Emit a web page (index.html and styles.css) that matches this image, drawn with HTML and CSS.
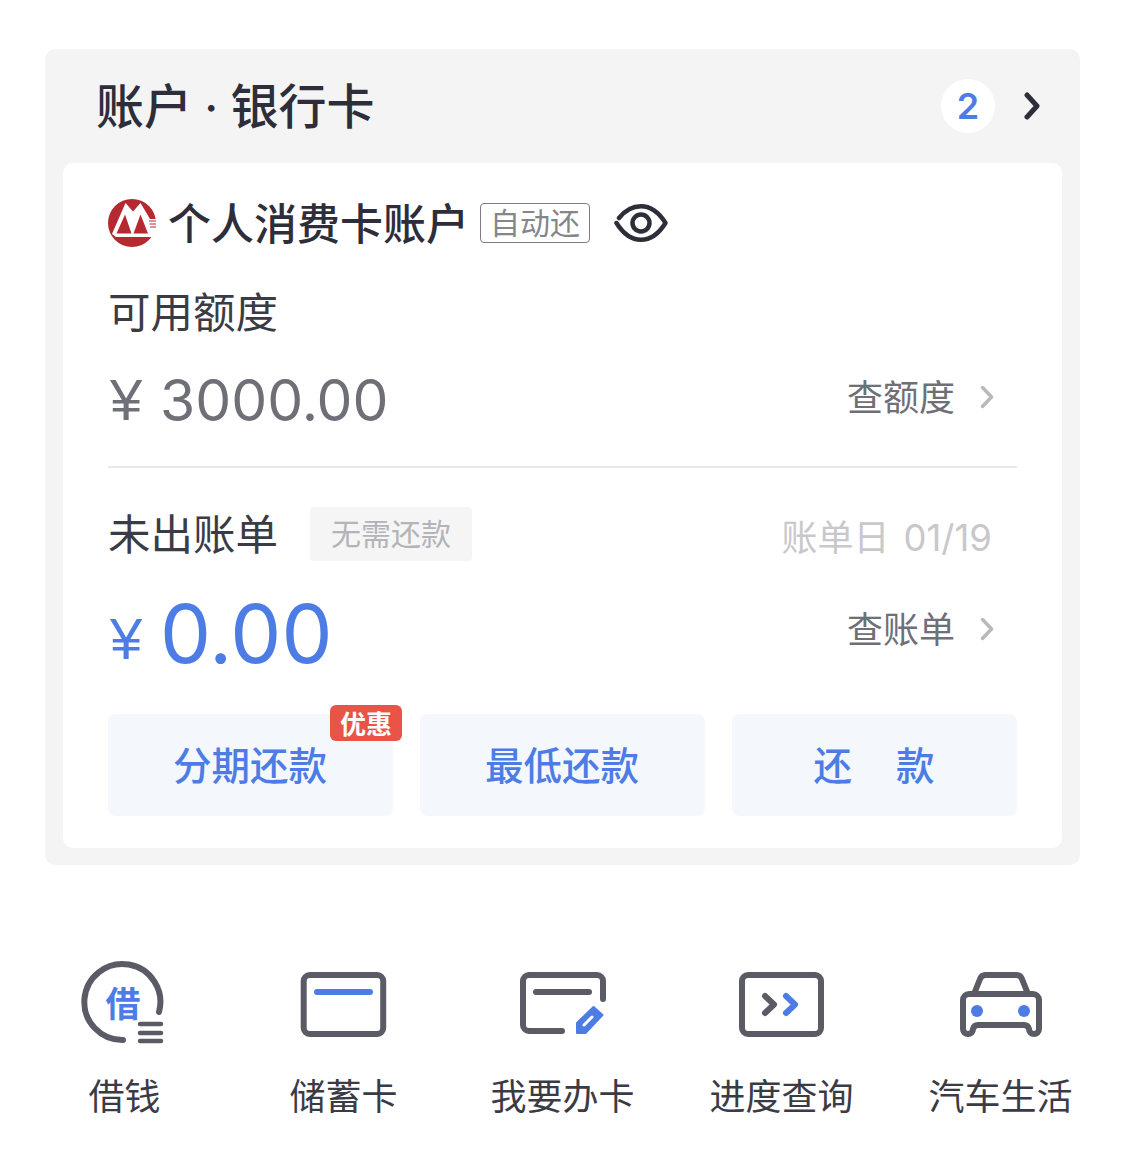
FILE: index.html
```html
<!DOCTYPE html>
<html lang="zh-CN">
<head>
<meta charset="utf-8">
<title>账户</title>
<link rel="stylesheet" href="styles.css">
</head>
<body>
<main class="page">
  <section class="panel">
    <header class="panel-head">
      <h1 class="panel-title">账户<span class="title-dot"> · </span>银行卡</h1>
      <div class="panel-actions">
        <span class="count">2</span>
        <svg class="head-chevron" viewBox="0 0 16 28"><path d="M3 3 L13 14 L3 25"/></svg>
      </div>
    </header>
    <div class="card">
      <div class="account-row">
        <svg class="logo" viewBox="0 0 48 48">
          <circle cx="24" cy="24" r="24" fill="#b42a30"/>
          <path d="M4 35 L17.500 4 L25 12.500 L32.500 4 L42 20 H48.500 V30 L44 38 H8 Z" fill="#fff"/>
          <path d="M8.500 34.500 L17 15.500 L23.500 34.500 Z M25.500 34.500 L32.500 15.500 L40 34.500 Z" fill="#b42a30"/>
          <path d="M41 22 H49 M41.500 25 H49 M42 28 H49" stroke="#b42a30" stroke-width="1"/>
        </svg>
        <span class="account-name">个人消费卡账户</span>
        <span class="auto-tag">自动还</span>
        <svg class="eye" viewBox="0 0 54 40">
          <path d="M5 15 C11 7.500 19 3.250 27 3.250 C36 3.250 44 8 51.500 20 C44 32 36 36.750 27 36.750 C18 36.750 10 32 2.500 20"/>
          <circle cx="27" cy="20" r="8.500"/>
        </svg>
      </div>

      <div class="label-row">可用额度</div>
      <div class="amount-row">
        <div class="amount amount-grey"><span class="yen">¥</span><span class="num">3000.00</span></div>
        <a class="more"><span class="more-text">查额度</span><svg class="more-chevron" viewBox="0 0 14 24"><path d="M2.500 2.500 L11.500 12 L2.500 21.500"/></svg></a>
      </div>

      <div class="divider"></div>

      <div class="bill-row">
        <span class="bill-label">未出账单</span>
        <span class="no-pay">无需还款</span>
        <span class="bill-date">账单日<span class="bill-digits">01/19</span></span>
      </div>
      <div class="amount-row amount-row-big">
        <div class="amount amount-blue"><span class="yen">¥</span><span class="num num-big">0.00</span></div>
        <a class="more more-high"><span class="more-text">查账单</span><svg class="more-chevron" viewBox="0 0 14 24"><path d="M2.500 2.500 L11.500 12 L2.500 21.500"/></svg></a>
      </div>

      <div class="buttons">
        <button class="btn">分期还款<span class="promo">优惠</span></button>
        <button class="btn">最低还款</button>
        <button class="btn btn-spaced"><span>还</span><span>款</span></button>
      </div>
    </div>
  </section>

  <nav class="shortcuts">
    <a class="shortcut">
      <svg class="icon" viewBox="0 0 100 100">
        <path class="ink" d="M85 57 A38 38 0 1 0 49 85"/>
        <path class="ink thin" d="M66 69 H87 M66 78 H87 M66 86 H87"/>
        <text class="icon-char" x="49" y="62" text-anchor="middle">借</text>
      </svg>
      <span class="shortcut-label">借钱</span>
    </a>
    <a class="shortcut">
      <svg class="icon" viewBox="0 0 100 100">
        <rect class="ink" x="10.700" y="20" width="79.500" height="59" rx="6"/>
        <path class="accent" d="M24 37 H77"/>
      </svg>
      <span class="shortcut-label">储蓄卡</span>
    </a>
    <a class="shortcut">
      <svg class="icon" viewBox="0 0 100 100">
        <path class="ink" d="M50 76 H17 a6 6 0 0 1 -6 -6 V26 a6 6 0 0 1 6 -6 H85 a6 6 0 0 1 6 6 V44"/>
        <path class="ink" d="M24 37 H77"/>
        <path class="pencil" d="M65 78 V68 L81.500 52 L90.500 60 L73.500 78 Z"/>
        <path class="slit" d="M72 70 L80 62"/>
      </svg>
      <span class="shortcut-label">我要办卡</span>
    </a>
    <a class="shortcut">
      <svg class="icon" viewBox="0 0 100 100">
        <rect class="ink" x="11" y="20" width="79" height="59" rx="6"/>
        <path class="ink" d="M34 41 L43 49.500 L34 58"/>
        <path class="accent" d="M55 41 L64 49.500 L55 58"/>
      </svg>
      <span class="shortcut-label">进度查询</span>
    </a>
    <a class="shortcut">
      <svg class="icon" viewBox="0 0 100 100">
        <path class="ink" d="M19 39 H83 a6 6 0 0 1 6 6 V74 a5 5 0 0 1 -10 0 q-1 -4 -5 -4 H28 q-4 0 -5 4 a5 5 0 0 1 -10 0 V45 a6 6 0 0 1 6 -6 Z"/>
        <path class="ink" d="M24 39 L30 24 a6 6 0 0 1 6 -4 H66 a6 6 0 0 1 6 4 L78 39"/>
        <circle class="dot" cx="27" cy="56" r="6"/>
        <circle class="dot" cx="74" cy="56" r="6"/>
      </svg>
      <span class="shortcut-label">汽车生活</span>
    </a>
  </nav>
</main>
</body>
</html>
```
FILE: styles.css
```css
* { box-sizing: border-box; }
html, body { margin: 0; padding: 0; background: #fff; }
body {
  font-family: "Noto Sans CJK SC", "Inter", sans-serif;
  color: #30303c;
}
.page { width: 1125px; height: 1163px; padding-top: 49px; overflow: hidden; }

.panel {
  margin: 0 45px;
  background: #f4f4f5;
  border-radius: 10px;
  padding: 0 18px 17px;
}
.panel-head {
  height: 114px;
  display: flex;
  align-items: center;
  justify-content: space-between;
  padding: 0 22px 0 33px;
}
.panel-title { margin: 0; padding-bottom: 2px; font-size: 48px; line-height: 60px; font-weight: 500; color: #2e2e3a; }
.title-dot { font-family: "Inter", sans-serif; font-size: 46px; white-space: pre; }
.panel-actions { display: flex; align-items: center; gap: 29px; }
.count {
  width: 54px; height: 54px; border-radius: 50%;
  background: #fff; color: #4d7de4;
  display: flex; align-items: center; justify-content: center;
  font-family: "Inter", sans-serif; font-size: 36px; font-weight: 600;
}
.head-chevron { width: 16px; height: 28px; fill: none; stroke: #2e2e3a; stroke-width: 5; stroke-linecap: round; stroke-linejoin: round; }

.card {
  background: #fff;
  border-radius: 10px;
  padding: 36px 45px 32px;
}
.account-row { display: flex; align-items: center; height: 48px; }
.logo { width: 48px; height: 48px; flex: none; }
.account-name { margin-left: 12px; padding-bottom: 4px; font-size: 43px; line-height: 48px; color: #2e2e3a; font-weight: 500; }
.auto-tag {
  margin-left: 11px; width: 110px; height: 40px;
  border: 1.5px solid #7d7d84; border-radius: 4px;
  color: #85858c; font-size: 30px; line-height: 34px; text-align: center;
}
.eye { margin-left: 24px; width: 54px; height: 40px; fill: none; stroke: #2e2e3a; stroke-width: 4.500; stroke-linecap: round; stroke-linejoin: round; }

.label-row { margin-top: 33px; font-size: 42.5px; line-height: 60px; color: #3b3b46; }

.amount-row { margin-top: 25px; height: 70px; display: flex; align-items: center; justify-content: space-between; }
.amount { display: flex; align-items: center; font-family: "Inter", sans-serif; }
.amount-grey { color: #6f6f78; }
.amount-blue { color: #4d7de4; }
.yen { width: 52px; padding-left: 2px; font-family: "Liberation Sans", sans-serif; font-size: 58px; line-height: 70px; }
.amount-blue .yen { margin-top: 12px; }
.num { font-size: 57px; line-height: 72px; padding-top: 2px; }
.num-big { font-size: 81px; line-height: 90px; }
.more {
  display: flex; align-items: center; gap: 25px;
  padding-right: 23px; padding-bottom: 6px;
  font-size: 36px; line-height: 50px; color: #6f6f78;
}
.more-text { padding-bottom: 4px; }
.more-chevron { width: 14px; height: 24px; fill: none; stroke: #b9b9bd; stroke-width: 3.500; stroke-linecap: round; stroke-linejoin: round; }

.divider { margin-top: 31px; height: 2px; background: #e9e9eb; }

.bill-row { margin-top: 39px; height: 54px; display: flex; align-items: center; }
.bill-label { padding-bottom: 4px; font-size: 42.5px; line-height: 50px; color: #3b3b46; }
.no-pay {
  margin-left: 32px; height: 54px; padding: 0 21px;
  background: #f5f5f6; border-radius: 4px;
  font-size: 30px; line-height: 50px; color: #b3b3b8;
}
.bill-date { margin-left: auto; padding-right: 25px; padding-top: 4px; font-size: 36px; line-height: 50px; color: #c8c8cc; }
.bill-digits { margin-left: 14px; font-family: "Inter", sans-serif; font-size: 36.5px; }

.amount-row-big { margin-top: 27px; height: 90px; }
.more-high { padding-bottom: 8px; }

.buttons { margin-top: 36px; display: grid; grid-template-columns: repeat(3, 285px); gap: 27px; }
.btn {
  position: relative;
  height: 102px; padding: 0 1px 4px 0; border: 0;
  background: #f4f7fc; border-radius: 8px;
  font-family: inherit; font-size: 38.5px; font-weight: 500; color: #4d7de4;
}
.btn-spaced { display: flex; align-items: center; justify-content: center; gap: 44px; }
.promo {
  position: absolute; top: -9px; right: -9px;
  width: 72px; height: 36px; border-radius: 6px;
  background: #ea5347; color: #fff;
  font-size: 26px; line-height: 36px; font-weight: 700; text-align: center;
}

.shortcuts {
  margin-top: 90px;
  display: grid;
  grid-template-columns: repeat(5, 219px);
  justify-content: center;
}
.shortcut { display: flex; flex-direction: column; align-items: center; }
.icon { width: 100px; height: 100px; margin-left: -2px; fill: none; stroke-linecap: round; stroke-linejoin: round; }
.ink { stroke: #5b5b66; stroke-width: 6; fill: none; }
.ink.thin { stroke-width: 4.500; }
.accent { stroke: #4d7de4; stroke-width: 6; fill: none; }
.dot { fill: #4d7de4; }
.pencil { fill: #4d7de4; stroke: #4d7de4; stroke-width: 2; }
.slit { stroke: #fff; stroke-width: 3; }
.icon-char { font-size: 35px; font-weight: 700; fill: #4d7de4; font-family: "Noto Sans CJK SC", sans-serif; }
.shortcut-label { margin-top: 14px; font-size: 36px; line-height: 50px; color: #3b3b46; white-space: nowrap; }
```
